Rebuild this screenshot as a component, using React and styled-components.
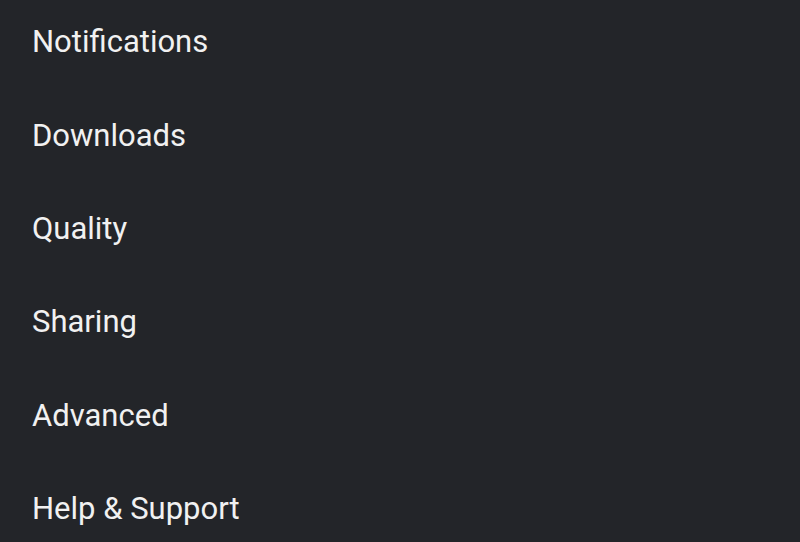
import React from 'react';
import styled, { createGlobalStyle } from 'styled-components';

const GlobalStyle = createGlobalStyle`
  html, body {
    margin: 0;
    padding: 0;
    background: #232529;
    overflow: hidden;
  }
  * {
    box-sizing: border-box;
  }
`;

const Page = styled.div`
  width: 800px;
  height: 542px;
  background: #232529;
  overflow: hidden;
`;

const Menu = styled.ul`
  list-style: none;
  margin: -5px 0 0 0;
  padding: 0;
`;

const Item = styled.li`
  display: flex;
  align-items: center;
  height: 93.4px;
  padding: 0 32px;
  font-family: Roboto, 'Noto Sans', sans-serif;
  font-size: 31px;
  font-weight: 400;
  color: #f1f1f1;
  cursor: pointer;
`;

const items = [
  'Notifications',
  'Downloads',
  'Quality',
  'Sharing',
  'Advanced',
  'Help & Support',
];

const App = () => {
  return (
    <>
      <GlobalStyle />
      <Page>
        <Menu>
          {items.map((label) => (
            <Item key={label}>{label}</Item>
          ))}
        </Menu>
      </Page>
    </>
  );
};

export default App;
